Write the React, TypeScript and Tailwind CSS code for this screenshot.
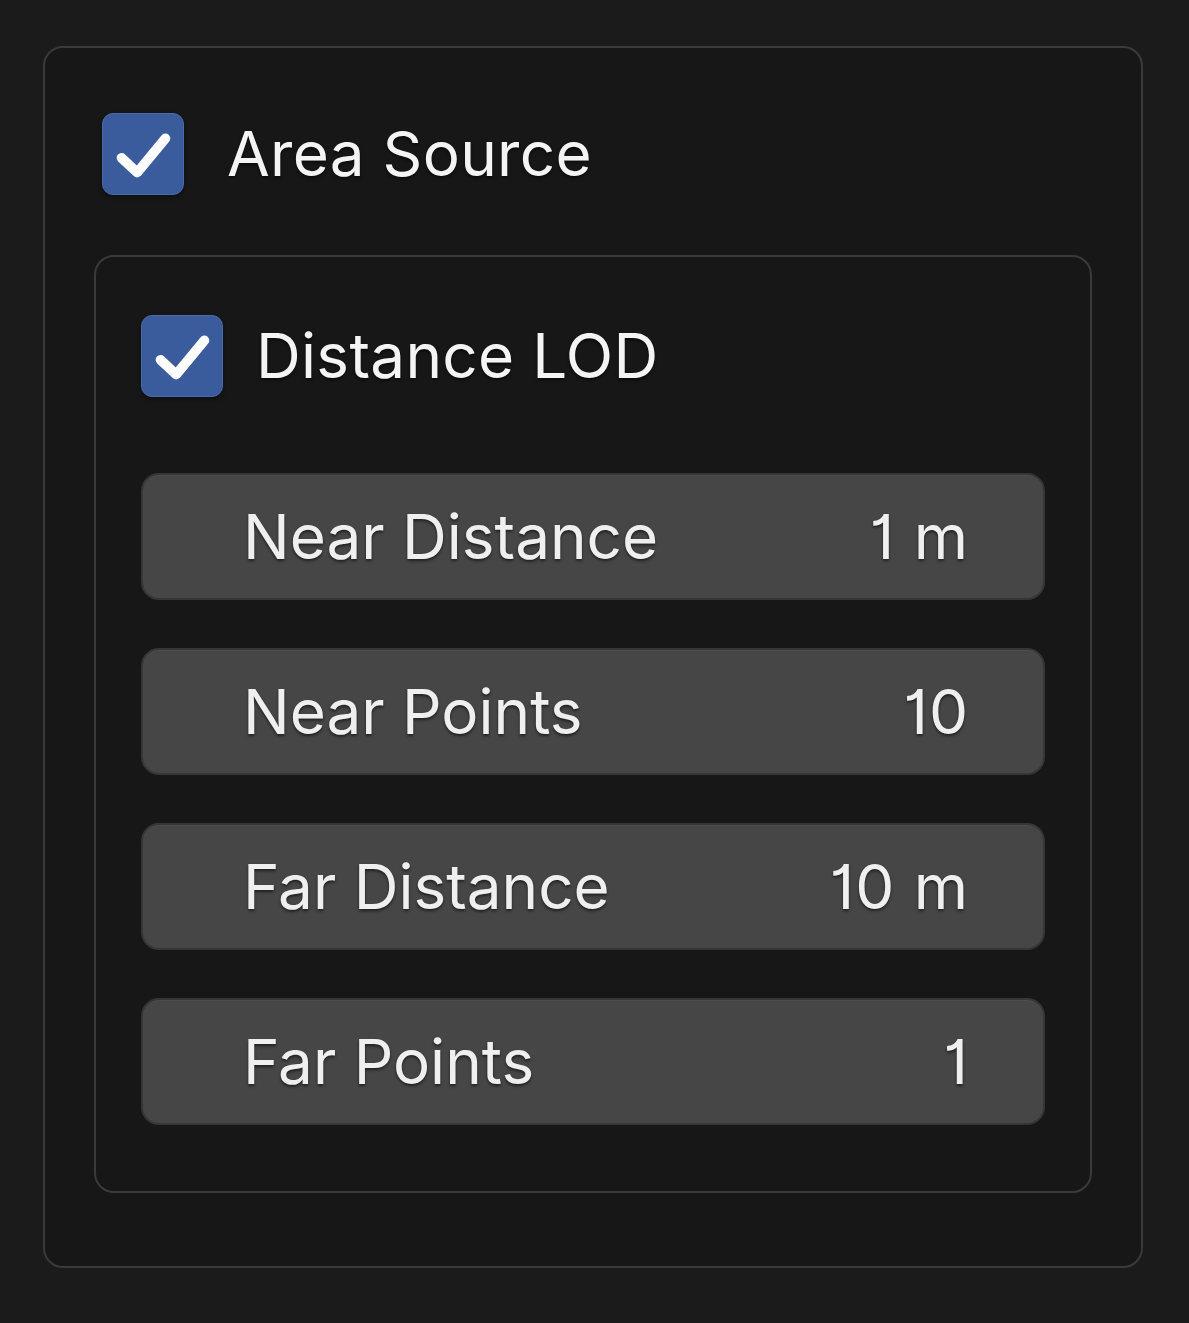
import { ReactNode } from "react";

type Field = { label: string; value: string };

const fields: Field[] = [
  { label: "Near Distance", value: "1 m" },
  { label: "Near Points", value: "10" },
  { label: "Far Distance", value: "10 m" },
  { label: "Far Points", value: "1" },
];

const textShadow = "[text-shadow:0_2px_3px_rgba(0,0,0,0.55)]";

function CheckBox() {
  return (
    <div className="flex h-[82px] w-[82px] shrink-0 items-center justify-center rounded-[11px] border border-[#4a6aa8] bg-[#3b5c9c] shadow-[0_2px_4px_rgba(0,0,0,0.4)]">
      <svg width="82" height="82" viewBox="0 0 82 82" fill="none">
        <path
          d="M19 45 L35 60 L64 25"
          stroke="#ffffff"
          strokeWidth="10"
          strokeLinecap="round"
          strokeLinejoin="round"
        />
      </svg>
    </div>
  );
}

function Toggle({ label, gap, children }: { label: string; gap: string; children?: ReactNode }) {
  return (
    <div className={`flex items-center ${gap}`}>
      <CheckBox />
      <span className={`text-[62px] leading-none tracking-[0.3px] text-[#f4f4f4] ${textShadow}`}>{label}</span>
      {children}
    </div>
  );
}

function FieldRow({ field }: { field: Field }) {
  return (
    <div className="flex h-[127px] items-center justify-between rounded-[18px] border-2 border-[#363636] bg-[#464646] pl-[100px] pr-[74px] shadow-[inset_0_1px_0_rgba(255,255,255,0.04)]">
      <span className={`text-[62px] leading-none text-[#efefef] ${textShadow}`}>{field.label}</span>
      <span className={`text-[62px] leading-none tracking-[1px] text-[#efefef] ${textShadow}`}>{field.value}</span>
    </div>
  );
}

export default function App() {
  return (
    <div
      className="min-h-[1323px] bg-[#1b1b1b] pl-[43px] pt-[46px] [font-feature-settings:'cv01']"
      style={{ fontFamily: "Inter, 'Noto Sans', sans-serif" }}
    >
      <div className="w-[1100px] rounded-[20px] border-2 border-[#3a3a3a] bg-[#171717] px-[49px] pb-[73px] pt-[65px]">
        <div className="ml-[8px]">
          <Toggle label="Area Source" gap="gap-[43px]" />
        </div>

        <div className="mt-[60px] rounded-[20px] border-2 border-[#3a3a3a] bg-[#171717] px-[45px] pb-[66px] pt-[58px]">
          <Toggle label="Distance LOD" gap="gap-[33px]" />

          <div className="mt-[76px] flex flex-col gap-[48px]">
            {fields.map((f) => (
              <FieldRow key={f.label} field={f} />
            ))}
          </div>
        </div>
      </div>
    </div>
  );
}
